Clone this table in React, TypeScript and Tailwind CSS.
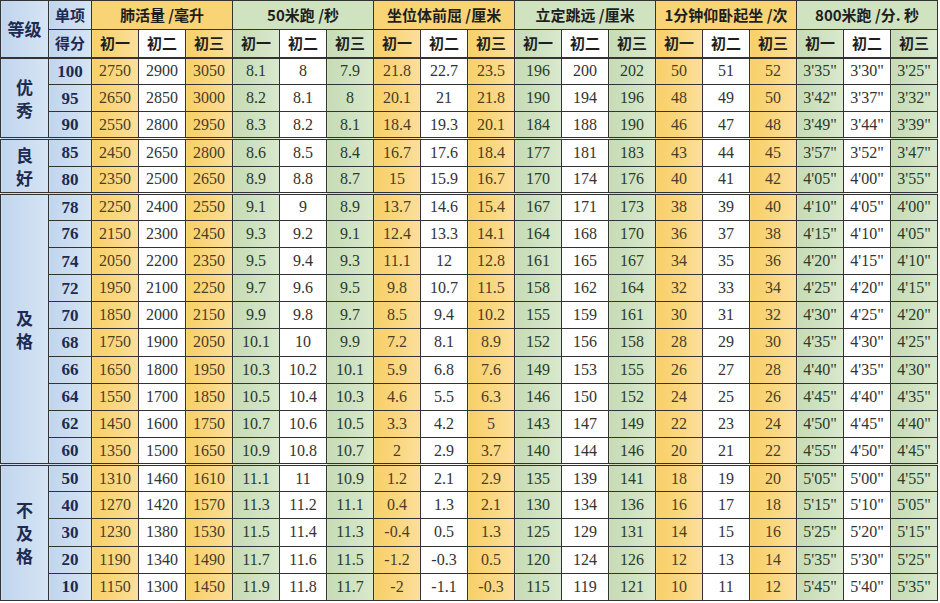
import React from 'react';

type Row = [string, ...string[]];

const items = [
  { title: '肺活量 /毫升', tone: 'y' },
  { title: '50米跑 /秒', tone: 'g' },
  { title: '坐位体前屈 /厘米', tone: 'y' },
  { title: '立定跳远 /厘米', tone: 'g' },
  { title: '1分钟仰卧起坐 /次', tone: 'y' },
  { title: '800米跑 /分. 秒', tone: 'g' },
];

const grades: { name: string; rows: Row[] }[] = [
  {
    name: '优秀',
    rows: [
      ['100', '2750', '2900', '3050', '8.1', '8', '7.9', '21.8', '22.7', '23.5', '196', '200', '202', '50', '51', '52', `3'35"`, `3'30"`, `3'25"`],
      ['95', '2650', '2850', '3000', '8.2', '8.1', '8', '20.1', '21', '21.8', '190', '194', '196', '48', '49', '50', `3'42"`, `3'37"`, `3'32"`],
      ['90', '2550', '2800', '2950', '8.3', '8.2', '8.1', '18.4', '19.3', '20.1', '184', '188', '190', '46', '47', '48', `3'49"`, `3'44"`, `3'39"`],
    ],
  },
  {
    name: '良好',
    rows: [
      ['85', '2450', '2650', '2800', '8.6', '8.5', '8.4', '16.7', '17.6', '18.4', '177', '181', '183', '43', '44', '45', `3'57"`, `3'52"`, `3'47"`],
      ['80', '2350', '2500', '2650', '8.9', '8.8', '8.7', '15', '15.9', '16.7', '170', '174', '176', '40', '41', '42', `4'05"`, `4'00"`, `3'55"`],
    ],
  },
  {
    name: '及格',
    rows: [
      ['78', '2250', '2400', '2550', '9.1', '9', '8.9', '13.7', '14.6', '15.4', '167', '171', '173', '38', '39', '40', `4'10"`, `4'05"`, `4'00"`],
      ['76', '2150', '2300', '2450', '9.3', '9.2', '9.1', '12.4', '13.3', '14.1', '164', '168', '170', '36', '37', '38', `4'15"`, `4'10"`, `4'05"`],
      ['74', '2050', '2200', '2350', '9.5', '9.4', '9.3', '11.1', '12', '12.8', '161', '165', '167', '34', '35', '36', `4'20"`, `4'15"`, `4'10"`],
      ['72', '1950', '2100', '2250', '9.7', '9.6', '9.5', '9.8', '10.7', '11.5', '158', '162', '164', '32', '33', '34', `4'25"`, `4'20"`, `4'15"`],
      ['70', '1850', '2000', '2150', '9.9', '9.8', '9.7', '8.5', '9.4', '10.2', '155', '159', '161', '30', '31', '32', `4'30"`, `4'25"`, `4'20"`],
      ['68', '1750', '1900', '2050', '10.1', '10', '9.9', '7.2', '8.1', '8.9', '152', '156', '158', '28', '29', '30', `4'35"`, `4'30"`, `4'25"`],
      ['66', '1650', '1800', '1950', '10.3', '10.2', '10.1', '5.9', '6.8', '7.6', '149', '153', '155', '26', '27', '28', `4'40"`, `4'35"`, `4'30"`],
      ['64', '1550', '1700', '1850', '10.5', '10.4', '10.3', '4.6', '5.5', '6.3', '146', '150', '152', '24', '25', '26', `4'45"`, `4'40"`, `4'35"`],
      ['62', '1450', '1600', '1750', '10.7', '10.6', '10.5', '3.3', '4.2', '5', '143', '147', '149', '22', '23', '24', `4'50"`, `4'45"`, `4'40"`],
      ['60', '1350', '1500', '1650', '10.9', '10.8', '10.7', '2', '2.9', '3.7', '140', '144', '146', '20', '21', '22', `4'55"`, `4'50"`, `4'45"`],
    ],
  },
  {
    name: '不及格',
    rows: [
      ['50', '1310', '1460', '1610', '11.1', '11', '10.9', '1.2', '2.1', '2.9', '135', '139', '141', '18', '19', '20', `5'05"`, `5'00"`, `4'55"`],
      ['40', '1270', '1420', '1570', '11.3', '11.2', '11.1', '0.4', '1.3', '2.1', '130', '134', '136', '16', '17', '18', `5'15"`, `5'10"`, `5'05"`],
      ['30', '1230', '1380', '1530', '11.5', '11.4', '11.3', '-0.4', '0.5', '1.3', '125', '129', '131', '14', '15', '16', `5'25"`, `5'20"`, `5'15"`],
      ['20', '1190', '1340', '1490', '11.7', '11.6', '11.5', '-1.2', '-0.3', '0.5', '120', '124', '126', '12', '13', '14', `5'35"`, `5'30"`, `5'25"`],
      ['10', '1150', '1300', '1450', '11.9', '11.8', '11.7', '-2', '-1.1', '-0.3', '115', '119', '121', '10', '11', '12', `5'45"`, `5'40"`, `5'35"`],
    ],
  },
];

const yellow = 'bg-linear-to-r from-[#f8cf68] via-[#fad77f] to-[#fbdf9b] text-[#4a3d25]';
const green = 'bg-linear-to-r from-[#c6dbb5] via-[#cfe2c1] to-[#d9e9cd] text-[#2c3a28]';
const white = 'bg-white text-[#333333]';
const blue = 'bg-linear-to-r from-[#c0d5ed] to-[#d6e4f4]';

const cjk = "font-['Noto_Sans_CJK_SC',sans-serif]";
const serif = "font-['Liberation_Serif','Times_New_Roman',serif]";

function toneFor(col: number) {
  const group = Math.floor(col / 3);
  const pos = col % 3;
  if (pos === 1) return white;
  return items[group].tone === 'y' ? yellow : green;
}

export default function App() {
  return (
    <div className="w-[940px] h-[603px] bg-white overflow-hidden">
      <table className="w-[938px] table-fixed border-collapse">
        <colgroup>
          <col className="w-[48px]" />
          <col className="w-[43px]" />
          {Array.from({ length: 18 }).map((_, i) => (
            <col key={i} className="w-[47px]" />
          ))}
        </colgroup>
        <thead>
          <tr className="h-[29px]">
            <th
              rowSpan={2}
              className={`${blue} ${cjk} border border-[#333] border-b-2 text-[17px] font-bold text-[#1d2a52] p-0`}
            >
              等级
            </th>
            <th className={`${blue} ${cjk} border border-[#333] text-[15px] font-bold text-[#1d2a52] p-0`}>单项</th>
            {items.map((it) => (
              <th
                key={it.title}
                colSpan={3}
                className={`${it.tone === 'y' ? 'bg-[#f9d477]' : 'bg-[#cfe3c1]'} ${cjk} border border-[#333] text-[15px] font-bold text-[#1e1e1e] p-0 whitespace-nowrap`}
              >
                {it.title}
              </th>
            ))}
          </tr>
          <tr className="h-[28px]">
            <th className={`${blue} ${cjk} border border-[#333] border-b-2 text-[15px] font-bold text-[#1d2a52] p-0`}>得分</th>
            {Array.from({ length: 18 }).map((_, i) => (
              <th
                key={i}
                className={`${toneFor(i)} ${cjk} border border-[#333] border-b-2 text-[15px] font-bold !text-[#1e1e1e] p-0`}
              >
                {['初一', '初二', '初三'][i % 3]}
              </th>
            ))}
          </tr>
        </thead>
        <tbody>
          {grades.map((g, gi) =>
            g.rows.map((r, ri) => {
              const last = ri === g.rows.length - 1 && gi < grades.length - 1;
              const edge = last ? 'border-b-[3px] border-b-[#333] border-double' : '';
              return (
                <tr key={r[0]} className="h-[27.15px]">
                  {ri === 0 && (
                    <td
                      rowSpan={g.rows.length}
                      className={`${blue} ${cjk} border border-[#333] ${gi < grades.length - 1 ? 'border-b-[3px] border-double' : ''} text-[17px] font-bold text-[#1d2a52] text-center p-0`}
                    >
                      <div className="flex flex-col items-center leading-[23px]">
                        {g.name.split('').map((c, k) => (
                          <span key={k}>{c}</span>
                        ))}
                      </div>
                    </td>
                  )}
                  <td className={`${blue} ${serif} border border-[#333] ${edge} text-[17px] font-bold text-[#1d2a52] text-center p-0 leading-none`}>
                    {r[0]}
                  </td>
                  {r.slice(1).map((v, ci) => (
                    <td
                      key={ci}
                      className={`${toneFor(ci)} ${serif} border border-[#333] ${edge} text-[16px] text-center p-0 leading-none whitespace-nowrap`}
                    >
                      {v}
                    </td>
                  ))}
                </tr>
              );
            })
          )}
        </tbody>
      </table>
    </div>
  );
}
